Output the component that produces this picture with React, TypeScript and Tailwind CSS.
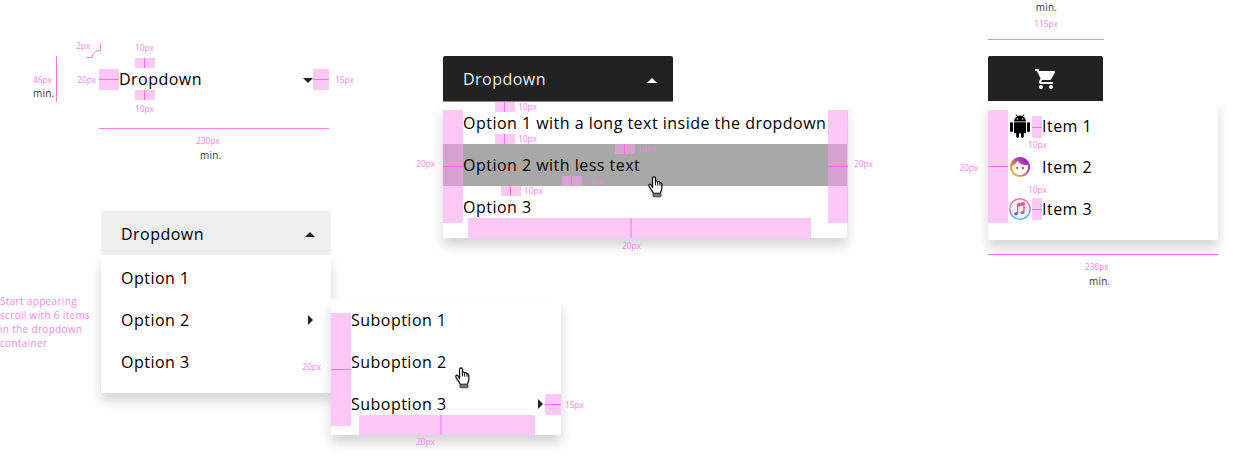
import type { ReactNode } from "react";

function Caret({ dir, className = "text-[#222]" }: { dir: "up" | "down" | "right"; className?: string }) {
  const d = { up: "M0 5 L5 0 L10 5Z", down: "M0 0 L10 0 L5 5Z", right: "M0 0 L5 5 L0 10Z" }[dir];
  const vertical = dir === "right";
  return (
    <svg width={vertical ? 5 : 10} height={vertical ? 10 : 5} viewBox={vertical ? "0 0 5 10" : "0 0 10 5"} className={className} fill="currentColor">
      <path d={d} />
    </svg>
  );
}

function Label({ className = "", children }: { className?: string; children: ReactNode }) {
  return <span className={`shrink-0 whitespace-nowrap text-[8.5px] leading-[10px] tracking-[-0.15px] text-[#fb85ec] ${className}`}>{children}</span>;
}

function Min({ className = "" }: { className?: string }) {
  return <span className={`text-[10px] leading-[14px] tracking-[0.2px] text-[#333] ${className}`}>min.</span>;
}

/* Horizontal distance: a tinted block crossed by a horizontal rule. */
function GapX({ className }: { className: string }) {
  return (
    <div className={`flex shrink-0 items-start bg-[#fb9eed]/57 ${className}`}>
      <div className="h-px w-full bg-[#fd6fe8]" />
    </div>
  );
}

/* Vertical distance: a tinted block crossed by a vertical rule. */
function GapY({ className = "h-[10px] w-[20px] pl-[9px]", line = "w-px bg-[#fd6fe8]" }: { className?: string; line?: string }) {
  return (
    <div className={`flex shrink-0 bg-[#fb9eed]/57 ${className}`}>
      <div className={`h-full ${line}`} />
    </div>
  );
}

/* Ten-pixel row padding, with its value at the right. */
function RowPadding({ className, faint = false }: { className: string; faint?: boolean }) {
  return (
    <div className={`absolute flex gap-[3px] ${className}`}>
      <GapY />
      <Label className={faint ? "opacity-60" : ""}>10px</Label>
    </div>
  );
}

/* Minimum width: a rule with its value below. */
function MinWidth({ className }: { className: string }) {
  return (
    <div className={`flex flex-col items-start ${className}`}>
      <div className="h-px w-full bg-[#fd78ea]" />
      <Label className="mt-[7px] pl-[97px]">230px</Label>
      <Min className="mt-[2px] pl-[101px]" />
    </div>
  );
}

function Option({ children, className = "", arrow = false }: { children?: ReactNode; className?: string; arrow?: boolean }) {
  return (
    <li className={`relative flex h-[42px] items-center justify-between pl-5 pr-[18px] ${className}`}>
      {children}
      {arrow && <Caret dir="right" />}
    </li>
  );
}

function Hand({ className }: { className: string }) {
  return (
    <svg className={`absolute drop-shadow-[0_1px_1px_rgba(0,0,0,0.25)] ${className}`} width="15" height="22" viewBox="0 0 15 22">
      <path
        d="M4.6 11.6V2.3C4.6.4 7.4.4 7.4 2.3V5.4C8 4.7 9.4 4.9 9.7 6C10.5 5.3 11.8 5.7 12 6.8C12.9 6.4 13.8 7 13.8 8.1V12.2C13.8 14.3 12.7 15.4 12.4 17.2H5.2C4.7 14.8 2.4 13.2 1.2 10.6C.1 8.6 1.6 7.5 2.9 8.7Z"
        fill="#fff"
        stroke="#000"
        strokeWidth="1.1"
        strokeLinejoin="round"
      />
      <path d="M7.4 5.2V9.4M9.7 6V9.6M12 6.9V9.8" stroke="#000" strokeWidth="1" fill="none" />
      <rect x="5" y="17.4" width="8" height="3.2" rx="0.8" fill="#777" stroke="#333" strokeWidth="0.8" />
    </svg>
  );
}

function Android() {
  return (
    <svg width="20" height="24" viewBox="0 0 20 24" fill="#000">
      <path d="M4 8.2H16V18A1.2 1.2 0 0 1 14.8 19.2H13.8V22.6A1.4 1.4 0 0 1 11 22.6V19.2H9V22.6A1.4 1.4 0 0 1 6.2 22.6V19.2H5.2A1.2 1.2 0 0 1 4 18Z" />
      <rect x="0" y="8" width="3" height="10" rx="1.5" />
      <rect x="17" y="8" width="3" height="10" rx="1.5" />
      <path d="M4 7.4C4 5.2 5.2 3.4 7 2.4L5.5.8L6 .3L7.8 2Q10 1.1 12.2 2L14 .3L14.5.8L13 2.4C14.8 3.4 16 5.2 16 7.4Z" />
      <circle cx="7.4" cy="5" r="0.7" fill="#fff" />
      <circle cx="12.6" cy="5" r="0.7" fill="#fff" />
    </svg>
  );
}

function Face() {
  return (
    <svg width="20" height="20" viewBox="2 2 20 20">
      <defs>
        <linearGradient id="face" x1="0" y1="1" x2="1" y2="0.1">
          <stop offset="0" stopColor="#f3d21c" />
          <stop offset="0.3" stopColor="#dda03c" />
          <stop offset="0.6" stopColor="#b8509c" />
          <stop offset="0.85" stopColor="#a320cb" />
          <stop offset="1" stopColor="#b060c8" />
        </linearGradient>
      </defs>
      <path
        fill="url(#face)"
        d="M9 11.75c-.69 0-1.25.56-1.25 1.25s.56 1.25 1.25 1.25 1.25-.56 1.25-1.25-.56-1.25-1.25-1.25zm6 0c-.69 0-1.25.56-1.25 1.25s.56 1.25 1.25 1.25 1.25-.56 1.25-1.25-.56-1.25-1.25-1.25zM12 2C6.48 2 2 6.48 2 12s4.48 10 10 10 10-4.48 10-10S17.52 2 12 2zm0 18c-4.41 0-8-3.59-8-8 0-.29.02-.58.05-.86 2.36-1.05 4.23-2.98 5.21-5.37C11.07 8.33 14.05 10 17.42 10c.78 0 1.53-.09 2.25-.26.21.71.33 1.47.33 2.26 0 4.41-3.59 8-8 8z"
      />
    </svg>
  );
}

function Music() {
  return (
    <svg width="22" height="22" viewBox="0 0 22 22">
      <defs>
        <linearGradient id="ring" x1="0.3" y1="0" x2="0.5" y2="1">
          <stop offset="0" stopColor="#fb6272" />
          <stop offset="0.35" stopColor="#e88bb0" />
          <stop offset="0.6" stopColor="#a36be8" />
          <stop offset="1" stopColor="#35c3f3" />
        </linearGradient>
        <linearGradient id="note" x1="0.7" y1="0" x2="0.3" y2="1">
          <stop offset="0" stopColor="#fb5c6c" />
          <stop offset="0.5" stopColor="#c95bc0" />
          <stop offset="1" stopColor="#4a6cf5" />
        </linearGradient>
      </defs>
      <circle cx="11" cy="11" r="10.2" fill="#f0f0f5" stroke="url(#ring)" strokeWidth="1.3" />
      <path
        fill="url(#note)"
        d="M8 5.6L15.7 4V13.5C15.7 15.2 14.6 16 13.3 16C11.2 16 11 13.8 12.8 13.2L14.3 12.7V7.6L9.2 8.7V14.8C9.2 16.4 8.2 17.3 6.9 17.3C4.8 17.3 4.6 15.1 6.3 14.5L8 14Z"
      />
    </svg>
  );
}

function Cart() {
  return (
    <svg width="24" height="24" viewBox="0 0 24 24" fill="#fff">
      <path d="M7 18c-1.1 0-1.99.9-1.99 2S5.9 22 7 22s2-.9 2-2-.9-2-2-2zM1 2v2h2l3.6 7.59-1.35 2.45c-.16.28-.25.61-.25.96 0 1.1.9 2 2 2h12v-2H7.42c-.14 0-.25-.11-.25-.25l.03-.12.9-1.63h7.45c.75 0 1.41-.41 1.75-1.03l3.58-6.49c.08-.14.12-.31.12-.48 0-.55-.45-1-1-1H5.21l-.94-2H1zm16 16c-1.1 0-1.99.9-1.99 2s.89 2 1.99 2 2-.9 2-2-.9-2-2-2z" />
    </svg>
  );
}

function ClosedDropdown() {
  return (
    <section className="flex h-[211px] pt-[56px]">
      <div className="flex h-[46px] w-[57px] flex-col items-start border-r border-[#fd78ea] pl-[33px] pt-[19px]">
        <Label>46px</Label>
        <Min className="mt-px" />
      </div>
      <div className="flex w-[42px] flex-col items-end">
        <Label className="pr-[3px] pt-[19px]">20px</Label>
      </div>
      <div className="relative w-[230px]">
        <div className="flex h-[46px] items-center">
          <GapX className="h-[21px] w-[20px] pt-[10px]" />
          <span className="flex-1">Dropdown</span>
          <span className="pt-[3px]">
            <Caret dir="down" />
          </span>
          <GapX className="h-[21px] w-[16px] pt-[10px]" />
        </div>
        <MinWidth className="mt-[26px]" />
        <div className="absolute -top-[13px] left-[36px] flex flex-col gap-[5px]">
          <Label>10px</Label>
          <GapY />
        </div>
        <div className="absolute left-[36px] top-[34px] flex flex-col gap-[4px]">
          <GapY />
          <Label>10px</Label>
        </div>
        <div className="absolute -left-[23px] -top-[15px] flex">
          <Label>2px</Label>
          <svg className="-ml-[4px] mt-[2px] shrink-0" width="16" height="16" viewBox="0 0 16 16" fill="none" stroke="#fd78ea">
            <path d="M0.5 14.5H6C6.5 10.5 9 7.5 14.5 7.5V0.5" />
          </svg>
        </div>
      </div>
      <Label className="pl-[6px] pt-[19px]">15px</Label>
    </section>
  );
}

function NestedDropdown() {
  return (
    <section className="flex">
      <p className="w-[101px] pt-[83px] text-[10px] leading-[14px] tracking-[0.33px] text-[#fb85ec]">
        Start appearing
        <br />
        scroll with 6 items
        <br />
        in the dropdown
        <br />
        container
      </p>
      <div className="relative w-[230px]">
        <header className="relative z-10 flex h-[44px] items-center justify-between rounded-t-[2px] bg-[#eee] pl-5 pr-4">
          <span className="pt-[2px]">Dropdown</span>
          <span className="pt-[3px]">
            <Caret dir="up" />
          </span>
        </header>
        <ul className="h-[138px] rounded-b-[2px] bg-white pt-[2px] shadow-[0_8px_12px_rgba(0,0,0,0.17)]">
          <Option>Option 1</Option>
          <Option arrow>Option 2</Option>
          <Option>Option 3</Option>
        </ul>
        <div className="absolute left-full top-[88px] h-[136px] w-[230px] rounded-[2px] bg-white shadow-[0_8px_12px_rgba(0,0,0,0.17)]">
          <ul>
            <Option>Suboption 1</Option>
            <Option>
              Suboption 2
              <Hand className="left-[124px] top-[26px]" />
            </Option>
            <Option arrow>Suboption 3</Option>
          </ul>
          <div className="absolute right-[210px] top-[14px] flex items-center gap-[10px]">
            <Label className="-mt-[5px]">20px</Label>
            <GapX className="h-[113px] w-[20px] pt-[56px]" />
          </div>
          <div className="absolute left-[214px] top-[95px] flex items-center gap-[4px]">
            <GapX className="h-[21px] w-[16px] pt-[10px]" />
            <Label>15px</Label>
          </div>
          <div className="absolute left-[28px] top-[116px] flex flex-col gap-[2px]">
            <GapY className="h-[20px] w-[176px] pl-[81px]" line="w-[2px] bg-[#ff9cf2]" />
            <Label className="pl-[57px]">20px</Label>
          </div>
        </div>
      </div>
    </section>
  );
}

function WideDropdown() {
  return (
    <section className="relative w-[404px]">
      <header className="relative z-10 flex h-[46px] w-[230px] items-center justify-between rounded-t-[2px] border-b border-[#888] bg-[#222] pl-5 pr-4 text-[#eee]">
        <span>Dropdown</span>
        <span className="pt-[3px]">
          <Caret dir="up" className="text-white" />
        </span>
      </header>
      <ul className="h-[136px] rounded-b-[2px] bg-white shadow-[0_8px_12px_rgba(0,0,0,0.17)]">
        <Option className="whitespace-nowrap">
          Option 1 with a long text inside the dropdown
          <RowPadding className="left-[52px] top-0" />
          <RowPadding className="bottom-0 left-[52px]" />
        </Option>
        <Option className="bg-[#a8a8a8]">
          Option 2 with less text
          <RowPadding className="left-[172px] top-0" faint />
          <RowPadding className="bottom-0 left-[119px]" faint />
        </Option>
        <Option>
          Option 3
          <RowPadding className="left-[58px] top-0" />
        </Option>
      </ul>
      <div className="absolute right-[384px] top-[54px] flex items-center gap-[8px]">
        <Label className="-mt-[6px]">20px</Label>
        <GapX className="h-[113px] w-[20px] pt-[56px]" />
      </div>
      <div className="absolute left-[385px] top-[54px] flex items-center gap-[6px]">
        <GapX className="h-[113px] w-[20px] pt-[56px]" />
        <Label className="-mt-[6px]">20px</Label>
      </div>
      <div className="absolute left-[25px] top-[162px] flex flex-col gap-[3px]">
        <GapY className="h-[20px] w-[343px] pl-[162px]" line="w-[2px] bg-[#ff9cf2]" />
        <Label className="pl-[154px]">20px</Label>
      </div>
      <Hand className="left-[205px] top-[120px]" />
    </section>
  );
}

function IconDropdown() {
  return (
    <section className="w-[231px]">
      <div className="flex w-[116px] flex-col items-center">
        <Min className="pl-px" />
        <Label className="mt-[5px]">115px</Label>
        <div className="mt-[10px] h-px w-full bg-[#fd78ea]" />
      </div>
      <div className="relative mt-[16px] w-[230px]">
        <header className="relative z-10 flex h-[45px] w-[115px] items-center justify-center rounded-t-[2px] bg-[#222]">
          <Cart />
        </header>
        <ul className="flex h-[139px] flex-col rounded-b-[2px] bg-white pt-[4px] shadow-[0_8px_12px_rgba(0,0,0,0.17)]">
          <li className="flex h-[41px] items-center pl-[22px]">
            <Android />
            <GapX className="ml-[2px] mt-[2px] h-[22px] w-[10px] pt-[11px]" />
            Item 1
          </li>
          <li className="flex h-[42px] items-center gap-[12px] pl-[22px]">
            <Face />
            Item 2
          </li>
          <li className="flex h-[41px] items-center pl-[21px]">
            <Music />
            <GapX className="ml-px h-[22px] w-[10px] pt-[11px]" />
            Item 3
          </li>
        </ul>
        <div className="absolute left-[40px] top-[84px] flex flex-col gap-[35px]">
          <Label>10px</Label>
          <Label>10px</Label>
        </div>
        <div className="absolute right-[210px] top-[54px] flex items-center gap-[10px]">
          <Label className="mt-[3px]">20px</Label>
          <GapX className="h-[113px] w-[20px] pt-[56px]" />
        </div>
      </div>
      <MinWidth className="mt-[14px]" />
    </section>
  );
}

export default function App() {
  return (
    <main className="flex h-[458px] w-[1233px] overflow-hidden bg-white font-['Open_Sans',sans-serif] text-[16px] leading-[22px] tracking-[0.48px] text-black">
      <div className="flex w-[443px] shrink-0 flex-col">
        <ClosedDropdown />
        <NestedDropdown />
      </div>
      <div className="w-[545px] shrink-0 pt-[56px]">
        <WideDropdown />
      </div>
      <div className="w-[245px] shrink-0">
        <IconDropdown />
      </div>
    </main>
  );
}
